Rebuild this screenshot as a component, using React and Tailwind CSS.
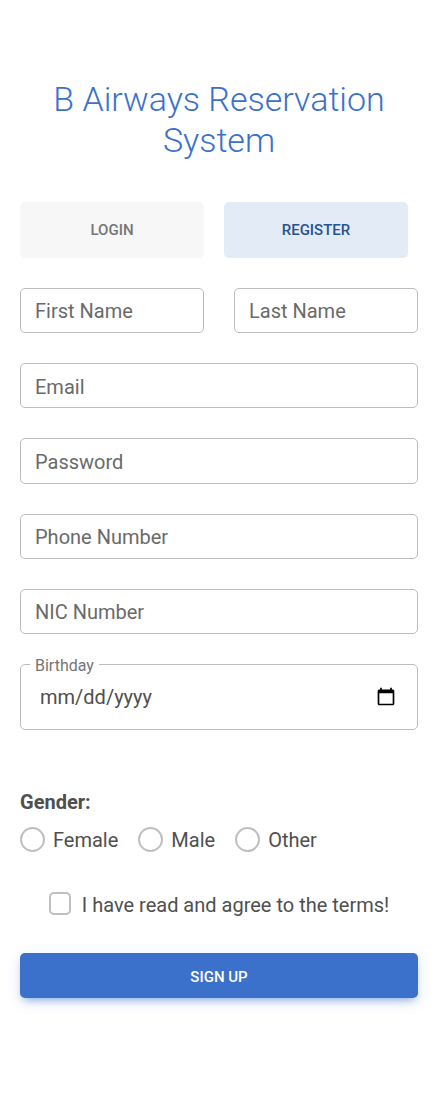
const outline = "rounded-[5px] border border-[#bdbdbd]";

function Field({ label, className = "h-[45px] pt-0.5" }) {
  return (
    <label className={`flex items-center px-3.5 ${outline} ${className}`}>
      <span className="text-[20px] leading-8 text-[#6a6a6a]">{label}</span>
    </label>
  );
}

function Radio({ label }) {
  return (
    <label className="flex h-[25px] items-center">
      <span className="size-[25px] rounded-full border-2 border-[#bfbfbf]" />
      <span className="ml-2 text-[20px] leading-8">{label}</span>
    </label>
  );
}

export default function App() {
  return (
    <main className="h-[1110px] bg-white pt-[79px] pr-[19px] pl-5 font-['Roboto',sans-serif] text-[#4f4f4f]">
      <h1 className="text-center text-[34px] leading-[41px] font-light text-[#3b71ca]">
        B Airways Reservation<br />System
      </h1>
      <nav className="mt-[41px] mr-2.5 flex gap-5 text-[15px] font-medium">
        <button className="h-14 flex-1 rounded-[5px] bg-[#f7f7f7] text-[#757575]">LOGIN</button>
        <button className="h-14 flex-1 rounded-[5px] bg-[#e3ebf7] text-[#285192]">REGISTER</button>
      </nav>
      <form className="mt-[30px]">
        <div className="flex gap-[30px]">
          <Field label="First Name" className="h-[45px] flex-1" />
          <Field label="Last Name" className="h-[45px] flex-1" />
        </div>
        <div className="mt-[30px] flex flex-col gap-[30px]">
          <Field label="Email" />
          <Field label="Password" className="h-[46px] pt-0.5" />
          <Field label="Phone Number" className="h-[45px]" />
          <Field label="NIC Number" className="h-[45px]" />
        </div>
        <div className={`relative mt-[30px] flex h-[66px] items-center justify-between pr-[21px] pl-[19px] ${outline}`}>
          <span className="absolute -top-[11px] left-[9px] bg-white px-[5px] text-[16px] leading-6 text-[#757575]">Birthday</span>
          <span className="text-[20px] leading-8">mm/dd/yyyy</span>
          <svg className="mb-px h-[19px] w-5 text-black" viewBox="0 0 24 24" preserveAspectRatio="none" fill="currentColor">
            <path d="M20 3h-1V1h-2v2H7V1H5v2H4c-1.1 0-2 .9-2 2v16c0 1.1.9 2 2 2h16c1.1 0 2-.9 2-2V5c0-1.1-.9-2-2-2zm0 18H4V8h16v13z" />
          </svg>
        </div>
        <div className="mt-14 text-[20px] leading-8 font-bold">Gender:</div>
        <div className="mt-[9px] flex gap-5">
          <Radio label="Female" />
          <Radio label="Male" />
          <Radio label="Other" />
        </div>
        <label className="mt-10 flex h-[23px] items-center justify-center">
          <span className="h-[23px] w-[22px] rounded-[5px] border-2 border-[#bfbfbf]" />
          <span className="ml-[11px] pt-0.5 text-[20px] leading-8">I have read and agree to the terms!</span>
        </label>
        <button className="mt-[38px] block h-[45px] w-full rounded-[5px] bg-[#3b71ca] pt-[3px] text-[15px] font-medium text-white shadow-[0_5px_9px_-4px_rgba(59,113,202,0.6),0_4px_14px_0_rgba(59,113,202,0.16)]">SIGN UP</button>
      </form>
    </main>
  );
}
